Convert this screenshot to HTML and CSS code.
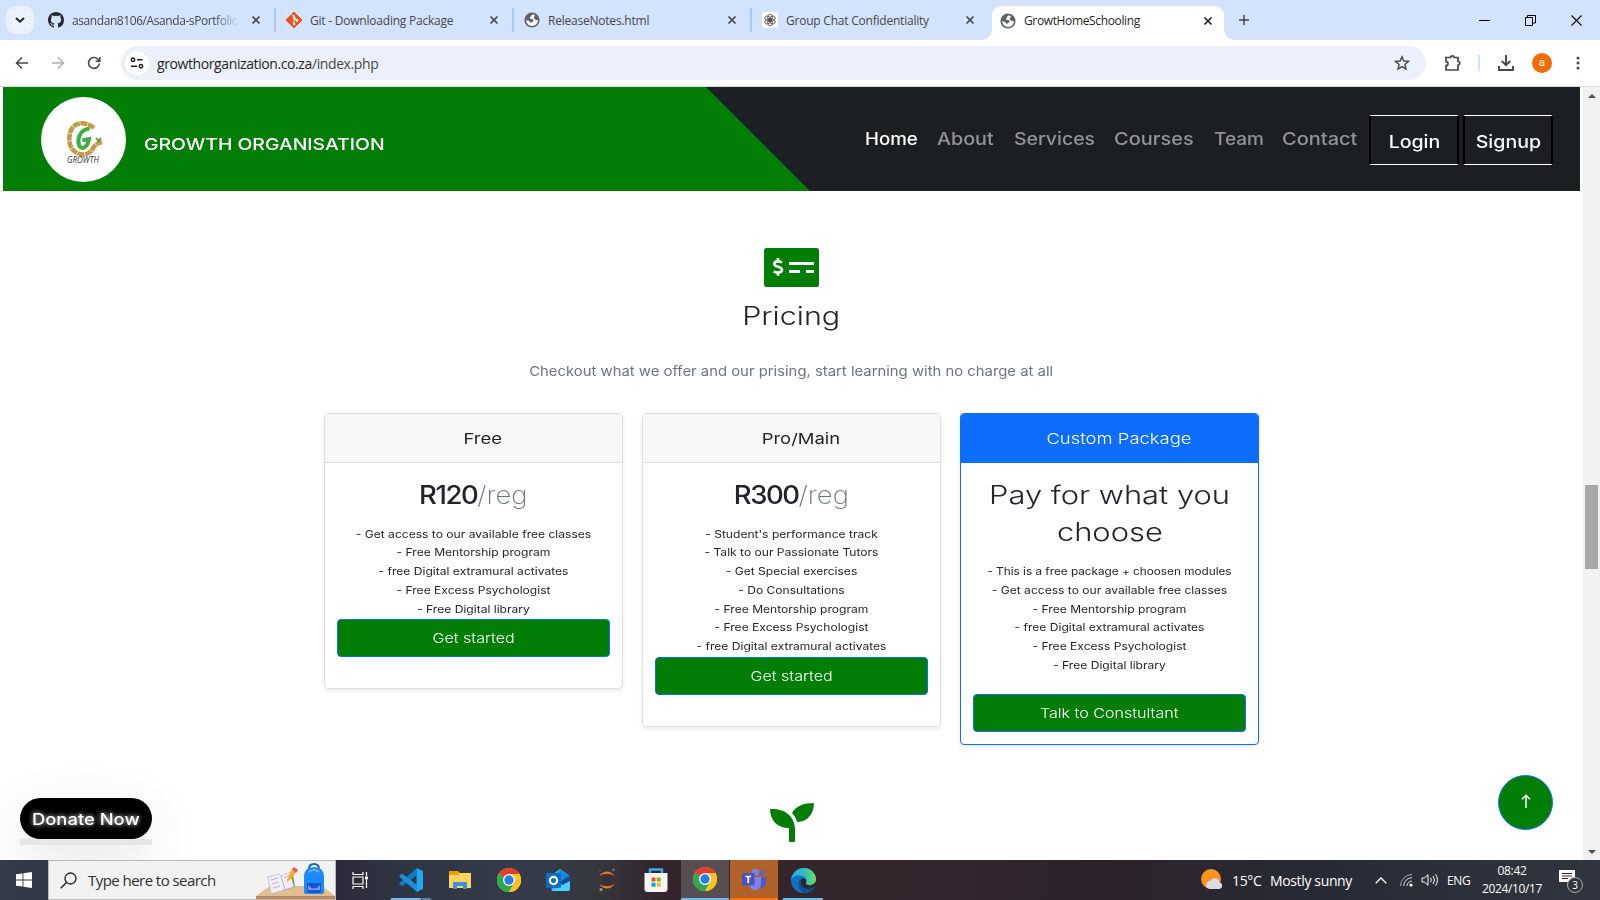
FILE: index.html
```html
<!DOCTYPE html>
<html lang="en">
<head>
<meta charset="utf-8">
<title>GrowtHomeSchooling</title>
<link rel="stylesheet" href="styles.css">
</head>
<body>
<svg class="defs" aria-hidden="true">
  <defs>
    <symbol id="x" viewBox="0 0 10 10"><path d="M1.5 1.5l7 7M8.5 1.5l-7 7" fill="none" stroke="currentColor" stroke-width="1.7"/></symbol>
    <symbol id="globe" viewBox="0 0 16 16"><circle cx="8" cy="8" r="7.6" fill="#5f6368"/><path d="M9.200 2.300C7.800 2.800 6.800 3.500 7 4.700 5.800 5 5.600 6.200 6.500 6.800c1 .5 2.500.2 3 1.100.5 1-.5 1.600-1.300 1.900-.5 1-1.500 1.200-2.200.3-.3-1.100-1.600-1.800-3.900-1.900A6 6 0 0 0 8 14c3.500-.2 5.800-2.600 6-5.700l-2-.2c-.8-.2-.9-1-1.600-1.400-.9-.5-1-1.400-.3-2l1.100-.9z" fill="#fff"/></symbol>
    <symbol id="chrome" viewBox="0 0 24 24"><circle cx="12" cy="12" r="12" fill="#fbc116"/><path d="M12 12L1.600 6A12 12 0 0 1 22.400 6z" fill="#e33b2e"/><path d="M1.600 6A12 12 0 0 0 12 24l5.200-9L12 12z" fill="#2da94f"/><path d="M12 6h10.400A12 12 0 0 1 12 24l5.200-9z" fill="#fcc31e"/><circle cx="12" cy="12" r="6" fill="#fff"/><circle cx="12" cy="12" r="4.700" fill="#2a7de9"/></symbol>
  </defs>
</svg>
<div class="window">
  <div class="tabstrip">
    <div class="tab-search"><svg width="10" height="6" viewBox="0 0 10 6"><path d="M1 1l4 3.600L9 1" fill="none" stroke="#1f1f1f" stroke-width="1.900"/></svg></div>
    <div class="tab t1">
      <svg class="fav" viewBox="0 0 16 16"><path fill="#24292f" d="M8 0C3.580 0 0 3.580 0 8c0 3.540 2.290 6.530 5.470 7.590.4.070.55-.17.55-.38 0-.19-.01-.82-.01-1.490-2.010.37-2.530-.49-2.690-.94-.09-.23-.48-.94-.82-1.130-.28-.15-.68-.52-.01-.53.63-.01 1.080.58 1.230.82.72 1.210 1.870.87 2.330.66.07-.52.28-.87.51-1.070-1.780-.2-3.640-.89-3.640-3.950 0-.87.31-1.590.82-2.150-.08-.2-.36-1.020.08-2.120 0 0 .67-.21 2.200.82a7.500 7.500 0 0 1 4 0c1.530-1.040 2.200-.82 2.200-.82.44 1.100.16 1.920.08 2.120.51.56.82 1.270.82 2.150 0 3.070-1.870 3.750-3.650 3.950.29.25.54.73.54 1.480 0 1.070-.01 1.930-.01 2.200 0 .21.15.46.55.38A8 8 0 0 0 16 8c0-4.420-3.580-8-8-8z"/></svg>
      <span class="label fade">asandan8106/Asanda-sPortfolio</span><svg class="close"><use href="#x"/></svg>
    </div>
    <div class="tab">
      <svg class="fav" viewBox="0 0 16 16"><path d="M8 0l8 8-8 8-8-8z" fill="#f4511e" stroke="#f4511e" stroke-linejoin="round"/><path d="M6 2.500l2 2.300v7M8 5.500l3 3" stroke="#fff" stroke-width="1.100" fill="none"/><circle cx="8" cy="4.800" r="1.300" fill="#fff"/><circle cx="8" cy="12" r="1.300" fill="#fff"/><circle cx="11" cy="8.500" r="1.300" fill="#fff"/></svg>
      <span class="label">Git - Downloading Package</span><svg class="close"><use href="#x"/></svg>
    </div>
    <div class="tab">
      <svg class="fav"><use href="#globe"/></svg><span class="label">ReleaseNotes.html</span><svg class="close"><use href="#x"/></svg>
    </div>
    <div class="tab last">
      <svg class="fav" viewBox="0 0 16 16"><rect width="16" height="16" rx="2.500" fill="#fff"/><g fill="none" stroke="#444" stroke-width=".8"><ellipse cx="8" cy="5.500" rx="2.400" ry="3.300"/><ellipse cx="8" cy="5.500" rx="2.400" ry="3.300" transform="rotate(60 8 8)"/><ellipse cx="8" cy="5.500" rx="2.400" ry="3.300" transform="rotate(120 8 8)"/><ellipse cx="8" cy="5.500" rx="2.400" ry="3.300" transform="rotate(180 8 8)"/><ellipse cx="8" cy="5.500" rx="2.400" ry="3.300" transform="rotate(240 8 8)"/><ellipse cx="8" cy="5.500" rx="2.400" ry="3.300" transform="rotate(300 8 8)"/></g></svg>
      <span class="label">Group Chat Confidentiality</span><svg class="close"><use href="#x"/></svg>
    </div>
    <div class="tab active">
      <svg class="fav"><use href="#globe"/></svg><span class="label">GrowtHomeSchooling</span><svg class="close"><use href="#x"/></svg>
    </div>
    <svg class="newtab" viewBox="0 0 10 10"><path d="M5 0v10M0 5h10" stroke="#474747" stroke-width="1.500"/></svg>
    <div class="winbtns">
      <svg viewBox="0 0 11 11"><path d="M0 5.500h11" stroke="#000"/></svg>
      <svg viewBox="0 0 11 11"><path d="M.5 2.500h7v8h-7zM2.500 2.500v-2h8v7.500h-3" fill="none" stroke="#000"/></svg>
      <svg viewBox="0 0 11 11"><path d="M.5.5l10 10M10.500.5l-10 10" stroke="#000" stroke-width="1.100"/></svg>
    </div>
  </div>
  <div class="toolbar">
    <svg class="tool back" viewBox="0 0 14 14"><path d="M13 7H1.800M7 1.500L1.500 7 7 12.500" fill="none" stroke="#474747" stroke-width="1.600"/></svg>
    <svg class="tool fwd" viewBox="0 0 14 14"><path d="M1 7h11.200M7 1.500L12.500 7 7 12.500" fill="none" stroke="#b0b0b0" stroke-width="1.600"/></svg>
    <svg class="tool reload" viewBox="0 0 14 14"><path d="M12.300 7.500A5.400 5.400 0 1 1 10.900 3.300L12.600 5M12.800 1v4.300H8.600" fill="none" stroke="#474747" stroke-width="1.600"/></svg>
    <div class="omnibox">
      <div class="site"><svg width="14" height="12" viewBox="0 0 14 12"><g fill="none" stroke="#1f1f1f" stroke-width="1.500"><circle cx="3" cy="2.700" r="1.700"/><path d="M7 2.700h5.500M1 9.300h6"/><circle cx="11" cy="9.300" r="1.700"/></g></svg></div>
      <span class="url">growthorganization.co.za<i>/index.php</i></span>
      <svg class="star" viewBox="0 0 16 16"><path d="M8 1.700l1.800 4.300 4.700.4-3.600 3 1.100 4.600-4-2.400-4 2.400 1.100-4.600-3.600-3 4.700-.4z" fill="none" stroke="#474747" stroke-width="1.400"/></svg>
    </div>
    <svg class="puzzle" viewBox="0 0 18 18"><path d="M2 3.500h4.700a1.700 1.700 0 0 1 3.400 0H14v4a1.700 1.700 0 0 1 0 3.500v5H2v-4.300a2 2 0 0 0 0-4z" fill="none" stroke="#474747" stroke-width="1.700"/></svg>
    <div class="tsep"></div>
    <svg class="dl" viewBox="0 0 16 16"><path d="M8 0v10M3.800 6L8 10.200 12.200 6M1 11v4h14v-4" fill="none" stroke="#474747" stroke-width="1.900"/></svg>
    <div class="avatar">a</div>
    <svg class="dots" viewBox="0 0 4 14"><g fill="#474747"><circle cx="2" cy="2" r="1.500"/><circle cx="2" cy="7" r="1.500"/><circle cx="2" cy="12" r="1.500"/></g></svg>
  </div>
  <div class="viewport">
    <main class="page">
      <header class="site-header">
        <div class="logo">
          <svg viewBox="0 0 85 85"><path d="M53 31c-7-6-17-6-21-1-5 6-5 18 0 23 6 6 15 6 19 0 3-5 5-7 10-8" fill="none" stroke="#c59a45" stroke-width="4.500" stroke-dasharray="7 .6"/><path d="M47 32c-8 1-11 10-9 16 2 6 9 2 10-6l-5 1" fill="none" stroke="#3fae49" stroke-width="4" stroke-linecap="round"/><path d="M55 41l2.500 3 2.500-3" stroke="#4a8d3a" stroke-width="1.500" fill="none"/><text x="26" y="66" textLength="32" lengthAdjust="spacingAndGlyphs" class="logo-text">GROWTH</text></svg>
        </div>
        <div class="brand"><span class="wide">GROWTH ORGANISATION</span></div>
        <nav class="nav">
          <a class="n-home">Home</a><a class="n-about">About</a><a class="n-services">Services</a><a class="n-courses">Courses</a><a class="n-team">Team</a><a class="n-contact">Contact</a>
        </nav>
        <div class="auth"><a class="box"><span class="wide">Login</span></a><a class="box"><span class="wide">Signup</span></a></div>
      </header>
      <section class="pricing">
        <svg class="check" viewBox="0 0 55 39"><rect width="55" height="39" rx="2.500" fill="#027e06"/><path d="M25 15.500h25M25 23.500h11M42 23.500h8" stroke="#fff" stroke-width="3"/><path d="M18 14.500c-2-1.600-7.500-2-7.700 1.300-.2 3.500 7.700 2.400 7.700 6 0 3.400-6 3.300-8.300 1.500M14 10v3M14 24.500v3.200" fill="none" stroke="#fff" stroke-width="2.700"/></svg>
        <h2><span class="wide">Pricing</span></h2>
        <p class="lead"><span class="wide">Checkout what we offer and our prising, start learning with no charge at all</span></p>
        <div class="cards">
          <article class="card">
            <h4><span class="wide">Free</span></h4>
            <div class="body">
              <h1><span class="wide price"><b>R120</b><small>/reg</small></span></h1>
              <ul><li>- Get access to our available free classes</li><li>- Free Mentorship program</li><li>- free Digital extramural activates</li><li>- Free Excess Psychologist</li><li>- Free Digital library</li></ul>
              <a class="btn"><span class="wide">Get started</span></a>
            </div>
          </article>
          <article class="card">
            <h4><span class="wide">Pro/Main</span></h4>
            <div class="body">
              <h1><span class="wide price"><b>R300</b><small>/reg</small></span></h1>
              <ul><li>- Student's performance track</li><li>- Talk to our Passionate Tutors</li><li>- Get Special exercises</li><li>- Do Consultations</li><li>- Free Mentorship program</li><li>- Free Excess Psychologist</li><li>- free Digital extramural activates</li></ul>
              <a class="btn"><span class="wide">Get started</span></a>
            </div>
          </article>
          <article class="card custom">
            <h4><span class="wide">Custom Package</span></h4>
            <div class="body">
              <h1><span class="wide">Pay for what you</span><br><span class="wide">choose</span></h1>
              <ul><li class="long">- This is a free package + choosen modules</li><li>- Get access to our available free classes</li><li>- Free Mentorship program</li><li>- free Digital extramural activates</li><li>- Free Excess Psychologist</li><li>- Free Digital library</li></ul>
              <a class="btn"><span class="wide">Talk to Constultant</span></a>
            </div>
          </article>
        </div>
        <svg class="leaf" viewBox="0 0 44 39"><path d="M0 6c12-1 24 5 25 19v12.500q0 1.500-1.500 1.500h-3q-1.500 0-1.500-1.500V25C7 25 0 17 0 6zM44 0c0 10-6 19-17 19-1-4-2.500-6.500-5-9C26 3 33 0 44 0z" fill="#027e06"/></svg>
      </section>
      <a class="donate"><span class="wide">Donate Now</span></a>
      <a class="totop"><svg width="10" height="14" viewBox="0 0 10 14"><path d="M5 14V1.500M1 5.300L5 1.200l4 4.100" fill="none" stroke="#fff" stroke-width="1.500"/></svg></a>
    </main>
    <div class="scrollbar">
      <svg width="8" height="4" viewBox="0 0 8 4"><path d="M0 4l4-4 4 4z" fill="#505050"/></svg>
      <div class="thumb"></div>
      <svg class="down" width="8" height="4" viewBox="0 0 8 4"><path d="M0 0l4 4 4-4z" fill="#505050"/></svg>
    </div>
  </div>
  <div class="taskbar">
    <div class="start"><svg width="16" height="16" viewBox="0 0 16 16"><path d="M0 2.300L6.500 1.400v6.200H0zM7.400 1.300L16 0v7.600H7.400zM0 8.400h6.500v6.200L0 13.700zM7.400 8.400H16V16l-8.600-1.300z" fill="#fff"/></svg></div>
    <div class="search">
      <svg class="mag" width="17" height="17" viewBox="0 0 17 17"><circle cx="10.500" cy="6.500" r="5.500" fill="none" stroke="#1f1f1f" stroke-width="1.300"/><path d="M6.500 10.500L.7 16.300" stroke="#1f1f1f" stroke-width="1.400"/></svg>
      <span>Type here to search</span>
      <svg class="art" width="79" height="38" viewBox="0 0 79 38"><path d="M0 35L14 25h52l13 10z" fill="#e2bd92"/><path d="M0 35h79v3H0z" fill="#b98a5e"/><path d="M13 20l24-6 2 12-23 7z" fill="#3f9450"/><path d="M12 16l11-3 2 2 9-4 4 15-10 3-2 1-11 3z" fill="#f1eef7" stroke="#b9b2cc" stroke-width=".7"/><path d="M25 15l4 14M15 19l7-2M16 23l7-2M17 27l7-2M28 17l6-3" stroke="#a9a2bd" stroke-width=".8"/><path d="M31 19l5-11 4 3-5 7-4 3z" fill="#ffa726"/><path d="M36 8l2-2 4 3-2 3z" fill="#ef5350"/><path d="M53 8q0-5 5-5t5 5" fill="none" stroke="#1565c0" stroke-width="2"/><path d="M48 16q0-10 10-10t10 10v15q0 2-3 2H51q-3 0-3-2z" fill="#1e88f5"/><path d="M51 22h14v8q0 2-2 2H53q-2 0-2-2z" fill="#0d5bd0"/><path d="M52 24q6 7 12 0v5H52z" fill="#8f8bf5"/><path d="M53 11q5-4 10 0" stroke="#64b5ff" stroke-width="2" fill="none"/></svg>
    </div>
    <div class="task view"><svg width="17" height="17" viewBox="0 0 17 17"><path d="M1 0v2.500h10V0M1 17v-2.500h10V17M1 5h10v7H1zM14.500 0v4M14.500 8v8" fill="none" stroke="#fff" stroke-width="1.200"/><path d="M13 4.500h3v3h-3z" fill="#fff"/></svg></div>
    <div class="task vs"><svg width="24" height="24" viewBox="0 0 24 24"><path d="M17.500 0L24 3v18l-6.500 3z" fill="#26a5f1"/><path d="M18 0v7L3 18.500.5 16.300V15z" fill="#0f7cc4"/><path d="M18 24v-7L3 5.500.5 7.700V9z" fill="#1e8fd8"/></svg></div>
    <div class="task"><svg width="22" height="20" viewBox="0 0 22 20"><path d="M0 1h9l2 2H0z" fill="#e0a100"/><path d="M0 3h22v15H0z" fill="#ffd35c"/><path d="M0 3h10v2H0z" fill="#e9a800"/><path d="M4 19v-7h14v7h-4v-3H8v3z" fill="#3b92d8"/></svg></div>
    <div class="task"><svg width="24" height="24"><use href="#chrome"/></svg></div>
    <div class="task"><svg width="25" height="24" viewBox="0 0 25 24"><path d="M3 9L14 1l10 7v13q0 2-2 2H6z" fill="#35b5f1"/><path d="M7 8l8-6 8 6-8 6z" fill="#1687d9"/><path d="M14 14l10-7v7l-7 5z" fill="#0c4d9e"/><path d="M5 23l19-10v8q0 2-2 2z" fill="#4ad0fb"/><rect y="5" width="15" height="15" rx="1.500" fill="#0f6cc4"/><circle cx="7.500" cy="12.500" r="3.600" fill="none" stroke="#fff" stroke-width="2.200"/></svg></div>
    <div class="task"><svg width="18" height="24" viewBox="0 0 18 24"><path d="M1 8q8-9 16 0-8-4.500-16 0zM1 16q8 9 16 0-8 4.500-16 0z" fill="#f37726"/><circle cx="15.500" cy="2" r="1.200" fill="#777"/><circle cx="3" cy="21.500" r="1.600" fill="#999"/><circle cx="2" cy="3" r=".8" fill="#666"/></svg></div>
    <div class="task"><svg width="24" height="24" viewBox="0 0 24 24"><path d="M6 6V1.500h12V6" fill="none" stroke="#32aee8" stroke-width="2.400"/><path d="M.5 5h23v16q0 3-3 3h-17q-3 0-3-3z" fill="#f6f6f6"/><path d="M7.500 9.500h4v4h-4z" fill="#f25022"/><path d="M12.700 9.500h4v4h-4z" fill="#7fba00"/><path d="M7.500 14.700h4v4h-4z" fill="#00a4ef"/><path d="M12.700 14.700h4v4h-4z" fill="#ffb900"/></svg></div>
    <div class="task on"><svg width="24" height="24"><use href="#chrome"/></svg></div>
    <div class="task teams"><svg width="25" height="22" viewBox="0 0 25 22"><circle cx="20" cy="5" r="2.600" fill="#5b62c8"/><circle cx="13.500" cy="4" r="3.500" fill="#7b83eb"/><path d="M15 9h9v6q-1 5-6 4.500z" fill="#5059c9"/><path d="M8 9h11v7q-1 6-6 6-4 0-5-4z" fill="#7b83eb"/><rect y="5" width="12.500" height="12.500" rx="1" fill="#4b53bc"/><path d="M3.500 8.500h5.600M6.300 8.500v6.500" stroke="#fff" stroke-width="1.700"/></svg></div>
    <div class="task edge"><svg width="25" height="25" viewBox="0 0 24 24"><defs><linearGradient id="eg"><stop offset="0" stop-color="#2aa7e8"/><stop offset=".6" stop-color="#35c2b8"/><stop offset="1" stop-color="#6be04e"/></linearGradient></defs><circle cx="12" cy="12" r="12" fill="#1070c4"/><path d="M0 11.500C1 4 7 0 12.500 0 20 0 24 6 24 10.500c0 4-3 6-6 6-2.500 0-4-1-3.700-2 1.200-1.600 1.200-5.300-2.800-6.700C7 6.500 2 7.500 0 11.500z" fill="url(#eg)"/><path d="M9 10.500q-1 8 6 9.500 4 .7 7.500-2 .6 0 .3.800A12 12 0 0 1 12 24Q7 20 7 15.500q0-3 2-5z" fill="#0b529c"/><path d="M14.300 14.500q-.5 2 3.700 2 3.500 0 6-3.500 0 4-1.500 5-3.500 2.500-7.500 2-6-1-6-8 1-2 2.500-2.500 4 1 2.800 5z" fill="#33242c"/></svg></div>
    <div class="tray">
      <svg class="weather" width="24" height="22" viewBox="0 0 24 22"><circle cx="11" cy="10" r="10" fill="#f7931e"/><path d="M10 20a4 4 0 0 1 .3-8 5 5 0 0 1 9.300 1.200A3.500 3.500 0 0 1 19.500 20z" fill="#d9dde4"/></svg>
      <span class="temp">15°C</span><span class="cond">Mostly sunny</span>
      <svg class="chev" width="12" height="7" viewBox="0 0 12 7"><path d="M.7 6.300L6 1l5.300 5.300" fill="none" stroke="#fff" stroke-width="1.300"/></svg>
      <svg class="wifi" width="14" height="14" viewBox="0 0 14 14"><g fill="none" stroke="#ddd"><path d="M1.500 13A11.500 11.500 0 0 1 13 1.500" opacity=".7"/><path d="M4.700 13A8.300 8.300 0 0 1 13 4.700"/><path d="M8 13a5 5 0 0 1 5-5"/></g><circle cx="12" cy="12" r="1.600" fill="#fff"/></svg>
      <svg class="vol" width="18" height="14" viewBox="0 0 18 14"><path d="M1 5h2.500L7 1.700v10.600L3.500 9H1zM9.500 4.700q1.600 2.300 0 4.600M12 3q3 4 0 8M14.500 1.300q4 5.700 0 11.400" fill="none" stroke="#fff"/></svg>
      <span class="lang">ENG</span>
      <div class="clock"><div>08:42</div><div>2024/10/17</div></div>
      <div class="notif"><svg width="16" height="16" viewBox="0 0 16 16"><path d="M0 0h16v12h-4v4l-4-4H0z" fill="#fff"/><path d="M3 3.500h10M3 6h10M3 8.500h6" stroke="#2d252c"/></svg><span class="badge">3</span></div>
    </div>
  </div>
</div>
</body>
</html>
```

FILE: styles.css
```css
* { box-sizing: border-box; }
body { margin: 0; background: #fff; font-family: "Open Sans", "Noto Sans", sans-serif; }
h1, h2, h4, p, ul { margin: 0; padding: 0; font-weight: 400; }
ul { list-style: none; }
.defs { position: absolute; width: 0; height: 0; }
.window { width: 1600px; height: 900px; display: flex; flex-direction: column; overflow: hidden; }
svg { flex: none; display: block; }

/* tab strip */
.tabstrip { height: 40px; flex: none; background: #d3e3fd; display: flex; align-items: center; }
.tab-search { width: 28px; height: 28px; margin-left: 6px; border-radius: 9px; background: #ebf1fd; display: flex; align-items: center; justify-content: center; }
.tab { width: 238px; height: 24px; display: flex; align-items: center; padding: 0 13px 0 10px; border-right: 2px solid #a8c7fa; font-size: 12px; color: #474747; }
.tab.t1 { width: 242px; margin-left: 0; padding-left: 14px; }
.tab.last { border-right-color: transparent; width: 240px; padding-right: 15px; }
.tab.active { width: 232px; height: 34px; align-self: flex-end; background: #fff; border: 0; border-radius: 9px 9px 0 0; padding: 0 11px 5px 8px; color: #1f1f1f; position: relative; }
.tab.active .label { letter-spacing: -.36px; }
.tab.active::before, .tab.active::after { content: ""; position: absolute; bottom: 0; width: 10px; height: 10px; }
.tab.active::before { left: -10px; background: radial-gradient(circle at 0 0, #d3e3fd 9.5px, #fff 10px); }
.tab.active::after { right: -10px; background: radial-gradient(circle at 100% 0, #d3e3fd 9.5px, #fff 10px); }
.fav { width: 16px; height: 16px; margin-right: 8px; }
.label { flex: 1; white-space: nowrap; letter-spacing: -.22px; }
.label.fade { width: 168px; letter-spacing: -.42px; -webkit-mask-image: linear-gradient(90deg, #000 85%, transparent); mask-image: linear-gradient(90deg, #000 85%, transparent); }
.close { width: 10px; height: 10px; margin-left: 12px; }
.newtab { width: 10px; height: 10px; margin-left: 15px; }
.winbtns { display: flex; gap: 35px; margin-left: auto; margin-right: 18px; }
.winbtns svg { width: 11px; height: 11px; }

/* toolbar */
.toolbar { height: 47px; flex: none; display: flex; align-items: center; border-bottom: 1px solid #dcdcdc; background: #fff; }
.tool { width: 14px; height: 14px; }
.back { margin-left: 15px; }
.fwd { margin-left: 22px; }
.reload { margin-left: 22px; }
.omnibox { width: 1305px; height: 34px; margin-left: 20px; border-radius: 17px; background: #ecf0fa; display: flex; align-items: center; }
.site { width: 24px; height: 24px; margin-left: 4px; border-radius: 50%; background: #fff; display: flex; align-items: center; justify-content: center; }
.url { margin-left: 8px; font-size: 14px; letter-spacing: -.4px; color: #1f1f1f; }
.url i { font-style: normal; color: #474747; }
.star { width: 16px; height: 16px; margin-left: auto; margin-right: 16px; }
.puzzle { width: 18px; height: 18px; margin-left: 18px; }
.tsep { width: 2px; height: 16px; margin-left: 16px; background: #d3e3fd; }
.dl { width: 16px; height: 16px; margin-left: 18px; }
.avatar { width: 20px; height: 20px; margin-left: 18px; border-radius: 50%; background: #ef6c00; color: #fff; font: 11px/19px Roboto, sans-serif; text-align: center; }
.dots { width: 4px; height: 14px; margin-left: 24px; }

/* page */
.viewport { height: 773px; flex: none; display: flex; overflow: hidden; position: relative; }
.page { width: 1583px; padding: 0 3px; font-family: Inter, sans-serif; color: #212529; }
.wide { display: inline-block; white-space: nowrap; transform: scaleX(1.15); }
.site-header { height: 104px; display: flex; align-items: center; padding-right: 27px; background: linear-gradient(#027e06, #027e06) 0 0 / 703px 100% no-repeat, linear-gradient(45deg, #027e06 49.8%, #1c1f22 50.2%) 703px 0 / 104px 104px no-repeat, #1c1f22; }
.logo { width: 85px; height: 85px; margin-left: 38px; border-radius: 50%; background: #fff; }
.logo-text { font: italic 8.500px "Open Sans", sans-serif; fill: #333; }
.brand { width: 240px; margin: 9px 0 0 18px; font-size: 16px; font-weight: 500; color: #fff; }
.brand .wide { transform: scaleX(1.212); transform-origin: left; }
.nav { display: flex; margin-left: auto; margin-right: 11px; gap: 20px; font-size: 17px; line-height: 20px; font-weight: 500; color: #929496; }
.nav a { display: block; white-space: nowrap; transform-origin: left; }
.nav .n-home { width: 52px; color: #fff; transform: scaleX(1.1); }
.nav .n-about { width: 57px; transform: scaleX(1.16); }
.nav .n-services { width: 80px; transform: scaleX(1.145); }
.nav .n-courses { width: 80px; transform: scaleX(1.175); }
.nav .n-team { width: 48px; transform: scaleX(1.12); }
.nav .n-contact { width: 76px; transform: scaleX(1.175); }
.auth { display: flex; gap: 4px; margin-top: 2px; color: #fff; font-size: 17px; font-weight: 500; }
.box { width: 90px; height: 50px; border: 2px solid #000; border-width: 1px 2px; border-top-color: #fff; border-bottom-color: #fff; display: flex; align-items: center; justify-content: center; padding-top: 3px; }

.pricing { display: flex; flex-direction: column; align-items: center; padding-top: 57px; }
.check { width: 55px; height: 39px; }
.pricing h2 { margin-top: 14px; font-size: 25px; line-height: 30px; font-weight: 350; }
.pricing h2 .wide { transform: scaleX(1.22); }
.lead { margin-top: 30px; font-size: 13.500px; line-height: 20px; color: #6c757d; }
.lead .wide { transform: scaleX(1.1); }
.cards { display: flex; align-items: flex-start; gap: 19px; margin-top: 32px; height: 332px; }
.card { width: 299px; border: 1px solid #dfdfdf; border-radius: 4px; box-shadow: 0 2px 4px rgba(0,0,0,.08); text-align: center; overflow: hidden; }
.card h4 { height: 49px; padding: 1px 0 0 19px; border-bottom: 1px solid #dfdfdf; background: #f7f7f7; font-size: 15px; line-height: 47px; }
.card h4 .wide { transform: scaleX(1.23); }
.body { padding: 13.500px 12px 31px; }
.body h1 { margin-bottom: 11.500px; font-size: 25px; line-height: 37.500px; font-weight: 350; }
.body h1 .wide { transform: scaleX(1.235); }
.body h1 .price { transform: scaleX(1.1); }
.body b { font-weight: 450; letter-spacing: -1.300px; }
.body small { font-size: 25px; font-weight: 200; color: #6c757d; }
.body li { font-size: 10.500px; line-height: 18.750px; white-space: nowrap; transform: scaleX(1.15); }
.body .long { transform: scaleX(1.12); }
.btn { display: block; height: 38px; border: 1px solid #0d6efd; border-radius: 4px; background: #027e06; color: #fff; font-size: 13.500px; line-height: 36px; font-weight: 300; }
.btn .wide { transform: scaleX(1.19); }
.custom { border-color: #0d6efd; }
.custom h4 { background: #0d6efd; border-color: #0d6efd; color: #fff; font-weight: 300; }
.custom .body { padding-bottom: 12px; }
.custom ul { margin-bottom: 18px; }
.leaf { width: 44px; height: 39px; margin-top: 58px; }

.donate { position: absolute; left: 20px; top: 711px; width: 132px; height: 41px; border-radius: 21px; background: #000; color: #fff; font-size: 16px; line-height: 42px; font-weight: 500; text-align: center; text-shadow: 0 0 5px #fff; box-shadow: 0 20px 60px rgba(0,0,0,.12); }
.donate::after { content: ""; position: absolute; left: 0; top: 41px; width: 132px; height: 6px; background: #e6e6e6; }
.totop { position: absolute; left: 1498px; top: 688px; width: 55px; height: 55px; border: 1px solid #0d6efd; border-radius: 50%; background: #027e06; display: flex; align-items: center; justify-content: center; padding-bottom: 3px; }

.scrollbar { width: 17px; background: #f1f1f1; display: flex; flex-direction: column; align-items: center; padding: 7px 0 6px; }
.thumb { width: 13px; height: 84px; margin-top: 387px; background: #a8a8a8; }
.down { margin-top: auto; }

/* taskbar */
.taskbar { height: 40px; flex: none; display: flex; color: #fff; background: linear-gradient(90deg, #343a47 0, #2c2a3a 340px, #2f3542 400px, #343b4a 530px, #36383f 590px, #33242c 660px, #35262e 900px, #2d2229 1100px, #272a35 1300px, #303540 1600px); }
.start { width: 48px; display: flex; align-items: center; justify-content: center; }
.search { width: 288px; border: 1px solid #b8b8b8; background: #f2f2f2; color: #303030; display: flex; align-items: center; font-size: 15px; letter-spacing: -.55px; }
.mag { margin-left: 11px; }
.search span { margin-left: 11px; flex: 1; white-space: nowrap; }
.task { width: 48px; margin-right: 1px; display: flex; align-items: center; justify-content: center; }
.view { margin-right: 3px; }
.vs { background: linear-gradient(90deg, #76b9ed 30px, #33414e 30px, #33414e 31px, #5a85a8 31px) 4px 100% / 40px 2px no-repeat; }
.on { background: #564e53; border-bottom: 2px solid #76b9ed; }
.teams { background: #b0622a; border-bottom: 2px solid #ff7300; }
.edge { background: linear-gradient(#76b9ed, #76b9ed) 4px 100% / 40px 2px no-repeat; }
.tray { margin-left: auto; display: flex; align-items: center; font-size: 14px; letter-spacing: -.36px; white-space: nowrap; }
.temp { width: 38px; margin-left: 8px; }
.cond { width: 83px; }
.chev { margin-left: 22px; }
.wifi { margin-left: 12px; }
.vol { margin-left: 8px; }
.lang { width: 26px; margin-left: 8px; font-size: 12px; }
.clock { width: 64px; margin-left: 7px; font-size: 12px; line-height: 18px; text-align: center; }
.notif { width: 41px; height: 20px; margin-left: 15px; position: relative; }
.badge { position: absolute; left: 8px; top: 7px; width: 16px; height: 16px; border: 1px solid #aaa; border-radius: 50%; background: #33353d; font-size: 10px; line-height: 14px; text-align: center; }
```
